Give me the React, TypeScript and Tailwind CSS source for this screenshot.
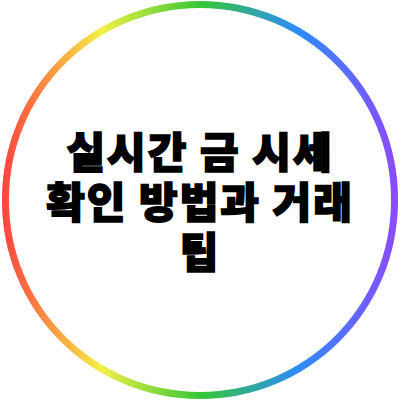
import React from "react";

const App = () => {
  return (
    <div className="w-[400px] h-[400px] bg-white flex items-center justify-center">
      <div className="w-[396px] h-[398px] rounded-full p-[7px] bg-[linear-gradient(to_right,#ff4141_0%,#f4f045_25%,#34c734_50%,#2e8bff_75%,#8d4aff_100%)]">
        <div className="w-full h-full rounded-full bg-white flex items-center justify-center">
          <h1
            className="text-center text-black text-[42px] leading-[50px] font-black tracking-[2px] [-webkit-text-stroke:1.6px_black] whitespace-nowrap"
            style={{ fontFamily: "'Noto Sans CJK KR', 'Noto Sans', sans-serif" }}
          >
            실시간 금 시세
            <br />
            확인 방법과 거래
            <br />팁
          </h1>
        </div>
      </div>
    </div>
  );
};

export default App;
